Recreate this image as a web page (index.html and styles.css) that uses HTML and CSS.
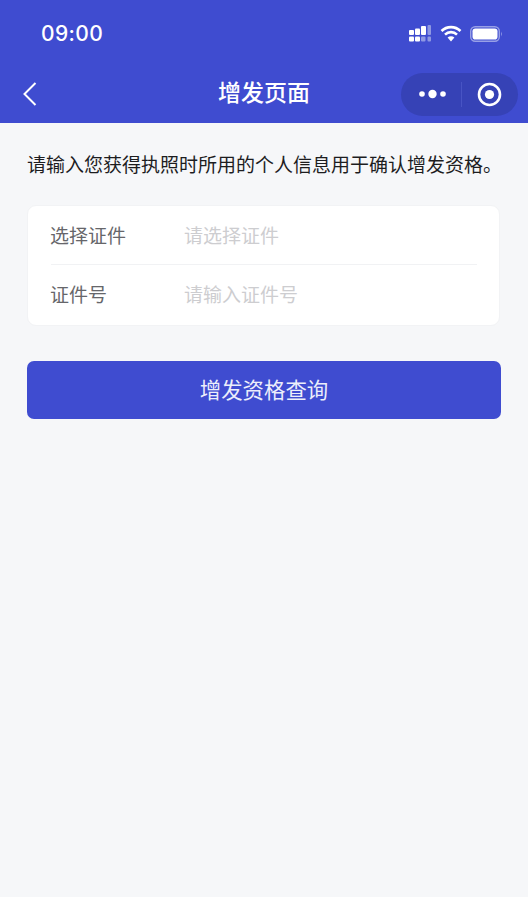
FILE: index.html
```html
<!DOCTYPE html>
<html lang="zh-CN">
<head>
    <meta charset="UTF-8">
    <title>增发页面</title>
    <link rel="stylesheet" href="styles.css">
</head>
<body>
    <div id="header">
        <div class="status-bar">
            <span class="time">09:00</span>
            <div class="status-icons">
                <svg width="23" height="17" viewBox="0 0 23 17">
                    <rect x="0" y="5" width="5" height="5" rx="1" fill="#fff"/>
                    <rect x="6" y="3.5" width="5" height="6.5" rx="1" fill="#fff"/>
                    <rect x="12" y="1" width="5" height="9" rx="1" fill="#fff"/>
                    <rect x="18.5" y="0" width="3.5" height="10" rx="1" fill="#8f98e2"/>
                    <rect x="0" y="11.5" width="5" height="5" rx="1" fill="#fff"/>
                    <rect x="6" y="11.5" width="5" height="5" rx="1" fill="#fff"/>
                    <rect x="12" y="11.5" width="4.5" height="5" rx="1" fill="#8f98e2"/>
                    <rect x="18.5" y="11.5" width="3.5" height="5" rx="1" fill="#8f98e2"/>
                </svg>
                <svg width="22" height="17" viewBox="0 0 22 17">
                    <path d="M1.5 6 A13.5 13.5 0 0 1 20.5 6" fill="none" stroke="#fff" stroke-width="2.6"/>
                    <path d="M5 9.6 A8.6 8.6 0 0 1 17 9.6" fill="none" stroke="#fff" stroke-width="2.6"/>
                    <path d="M7.6 12.6 A4.8 4.8 0 0 1 14.4 12.6 L11 16.4 Z" fill="#fff"/>
                </svg>
                <svg width="33" height="16" viewBox="0 0 33 16">
                    <rect x="0.7" y="0.7" width="28.6" height="14.6" rx="4.5" fill="none" stroke="#98a0e6" stroke-width="1.4"/>
                    <rect x="2.5" y="2.5" width="25" height="11" rx="2.8" fill="#fff"/>
                    <path d="M31 5.5 Q32.8 8 31 10.5 Z" fill="#98a0e6"/>
                </svg>
            </div>
        </div>
        <div class="nav-bar">
            <svg class="back" width="16" height="26" viewBox="0 0 16 26">
                <path d="M13.5 2 L2.5 13 L13.5 24" fill="none" stroke="#fff" stroke-width="2"/>
            </svg>
            <span class="nav-title">增发页面</span>
            <div class="capsule">
                <svg width="27" height="10" viewBox="0 0 27 10">
                    <circle cx="3" cy="5" r="2.8" fill="#fff"/>
                    <circle cx="13.5" cy="5" r="4.2" fill="#fff"/>
                    <circle cx="24" cy="5" r="2.8" fill="#fff"/>
                </svg>
                <span class="capsule-line"></span>
                <svg width="25" height="25" viewBox="0 0 25 25">
                    <circle cx="12.5" cy="12.5" r="10.5" fill="none" stroke="#fff" stroke-width="2.6"/>
                    <circle cx="12.5" cy="12.5" r="4.6" fill="#fff"/>
                </svg>
            </div>
        </div>
    </div>
    <div id="content">
        <p class="tip">请输入您获得执照时所用的个人信息用于确认增发资格。</p>
        <div class="form-card">
            <div class="form-row">
                <span class="form-label">选择证件</span>
                <span class="form-value">请选择证件</span>
            </div>
            <div class="form-row">
                <span class="form-label">证件号</span>
                <span class="form-value">请输入证件号</span>
            </div>
        </div>
        <button class="btn">增发资格查询</button>
    </div>
</body>
</html>
```

FILE: styles.css
```css
*{
    box-sizing: border-box;
}
html,body{
    height: 100%;
}
body{
    margin: 0;
    background-color: #f6f7f9;
    font-family: "Noto Sans CJK SC", "Liberation Sans", sans-serif;
}
#header{
    height: 123px;
    background-color: #3f4cd0;
    color: white;
}
.status-bar{
    height: 67px;
    padding: 0 25px 0 41px;
    display: flex;
    align-items: center;
    justify-content: space-between;
}
.time{
    font-family: Inter, "Liberation Sans", sans-serif;
    font-size: 21px;
    font-weight: 500;
    letter-spacing: 0.4px;
}
.status-icons{
    display: flex;
    align-items: center;
    gap: 8px;
}
.nav-bar{
    height: 54px;
    padding: 0 10px 0 22px;
    display: flex;
    align-items: center;
    position: relative;
}
.nav-title{
    position: absolute;
    left: 0;
    right: 0;
    top: 9px;
    text-align: center;
    font-size: 23px;
    font-weight: 500;
    line-height: 30px;
}
.capsule{
    margin-left: auto;
    width: 117px;
    height: 43px;
    padding: 0 16px 0 18px;
    border-radius: 22px;
    background-color: #3642b6;
    display: flex;
    align-items: center;
    justify-content: space-between;
}
.capsule-line{
    width: 1px;
    height: 25px;
    background-color: #4854c4;
}
#content{
    padding: 27px 27px 0 27px;
}
.tip{
    margin: 0;
    color: #1d1d1f;
    font-size: 19px;
    line-height: 28px;
    white-space: nowrap;
}
.form-card{
    margin-top: 27px;
    width: 473px;
    padding: 0 22px 0 23px;
    background-color: white;
    border-radius: 9px;
    border: 1px solid #f2f3f5;
}
.form-row{
    height: 59px;
    padding-bottom: 2px;
    display: flex;
    align-items: center;
    font-size: 19px;
}
.form-row:first-child{
    border-bottom: 1px solid #f1f2f4;
}
.form-row:last-child{
    height: 60px;
    padding-bottom: 4px;
}
.form-label{
    width: 134px;
    margin-left: -1px;
    color: #66666a;
}
.form-value{
    color: #cdcdd0;
}
.btn{
    display: block;
    margin-top: 35px;
    width: 474px;
    height: 58px;
    padding-bottom: 4px;
    border: none;
    border-radius: 7px;
    background-color: #3f4cd0;
    color: #eceefb;
    font-family: inherit;
    font-size: 21.4px;
}
```
